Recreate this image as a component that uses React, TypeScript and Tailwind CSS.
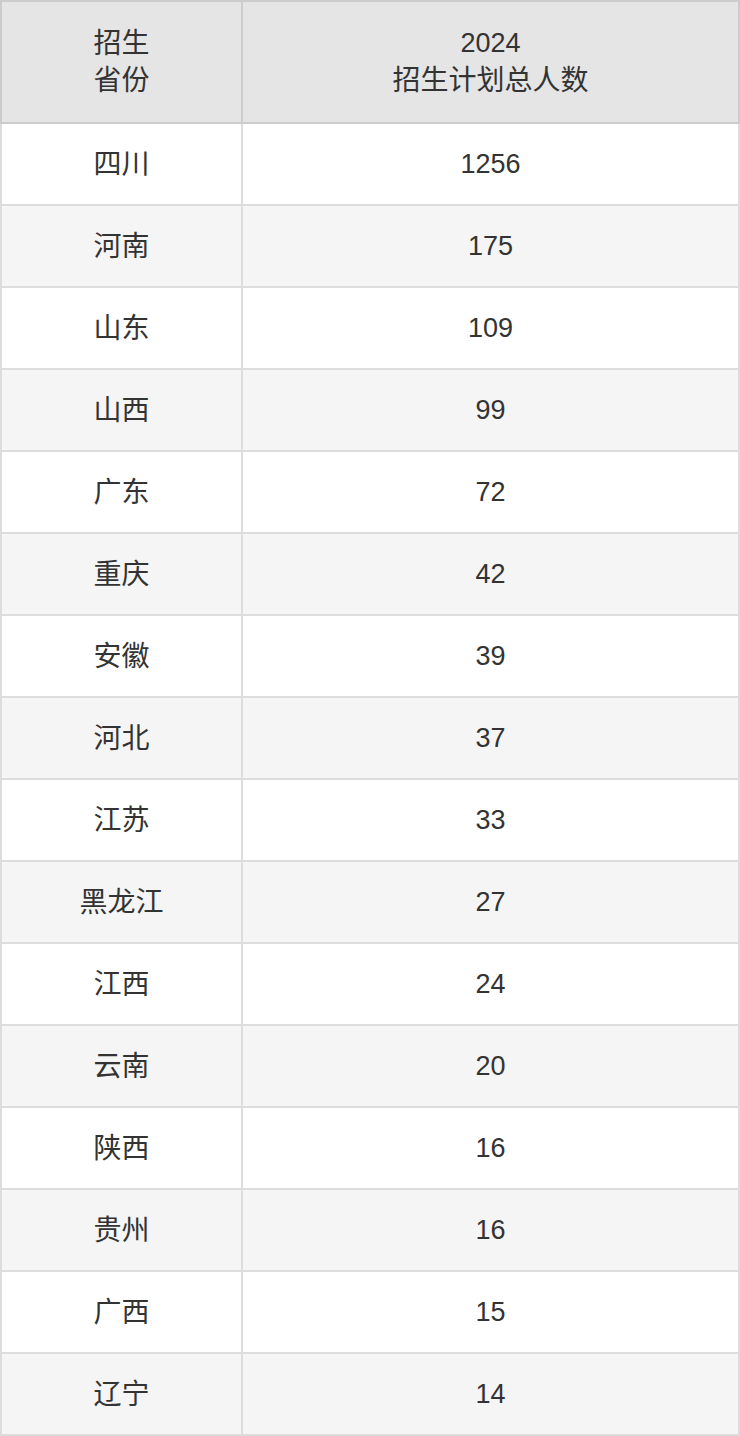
import React from 'react';

/**
 * Admission plan rows: province and 2024 planned total
 */
interface PlanRow {
  province: string;
  total: number;
}

const rows: PlanRow[] = [
  { province: '四川', total: 1256 },
  { province: '河南', total: 175 },
  { province: '山东', total: 109 },
  { province: '山西', total: 99 },
  { province: '广东', total: 72 },
  { province: '重庆', total: 42 },
  { province: '安徽', total: 39 },
  { province: '河北', total: 37 },
  { province: '江苏', total: 33 },
  { province: '黑龙江', total: 27 },
  { province: '江西', total: 24 },
  { province: '云南', total: 20 },
  { province: '陕西', total: 16 },
  { province: '贵州', total: 16 },
  { province: '广西', total: 15 },
  { province: '辽宁', total: 14 },
];

const App: React.FC = () => {
  return (
    <div
      className="w-[740px] text-[28px] leading-[37px] text-[#333]"
      style={{ fontFamily: '"Liberation Sans", "Noto Sans CJK SC", sans-serif' }}
    >
      {/* Header */}
      <div className="flex h-[124px] border-2 border-[#cccccc] bg-[#e5e5e5]">
        <div className="flex w-[239px] flex-col items-center justify-center">
          <span>招生</span>
          <span>省份</span>
        </div>
        <div className="flex flex-1 flex-col items-center justify-center border-l-2 border-[#cccccc]">
          <span className="text-[27px]">2024</span>
          <span>招生计划总人数</span>
        </div>
      </div>

      {/* Body */}
      {rows.map((row, i) => (
        <div
          key={row.province}
          className={`flex h-[82px] border-x-2 border-b-2 border-[#dddddd] ${
            i % 2 === 0 ? 'bg-white' : 'bg-[#f5f5f5]'
          }`}
        >
          <div className="flex w-[239px] items-center justify-center">{row.province}</div>
          <div className="flex flex-1 items-center justify-center border-l-2 border-[#dddddd] text-[27px]">
            {row.total}
          </div>
        </div>
      ))}
    </div>
  );
};

export default App;
